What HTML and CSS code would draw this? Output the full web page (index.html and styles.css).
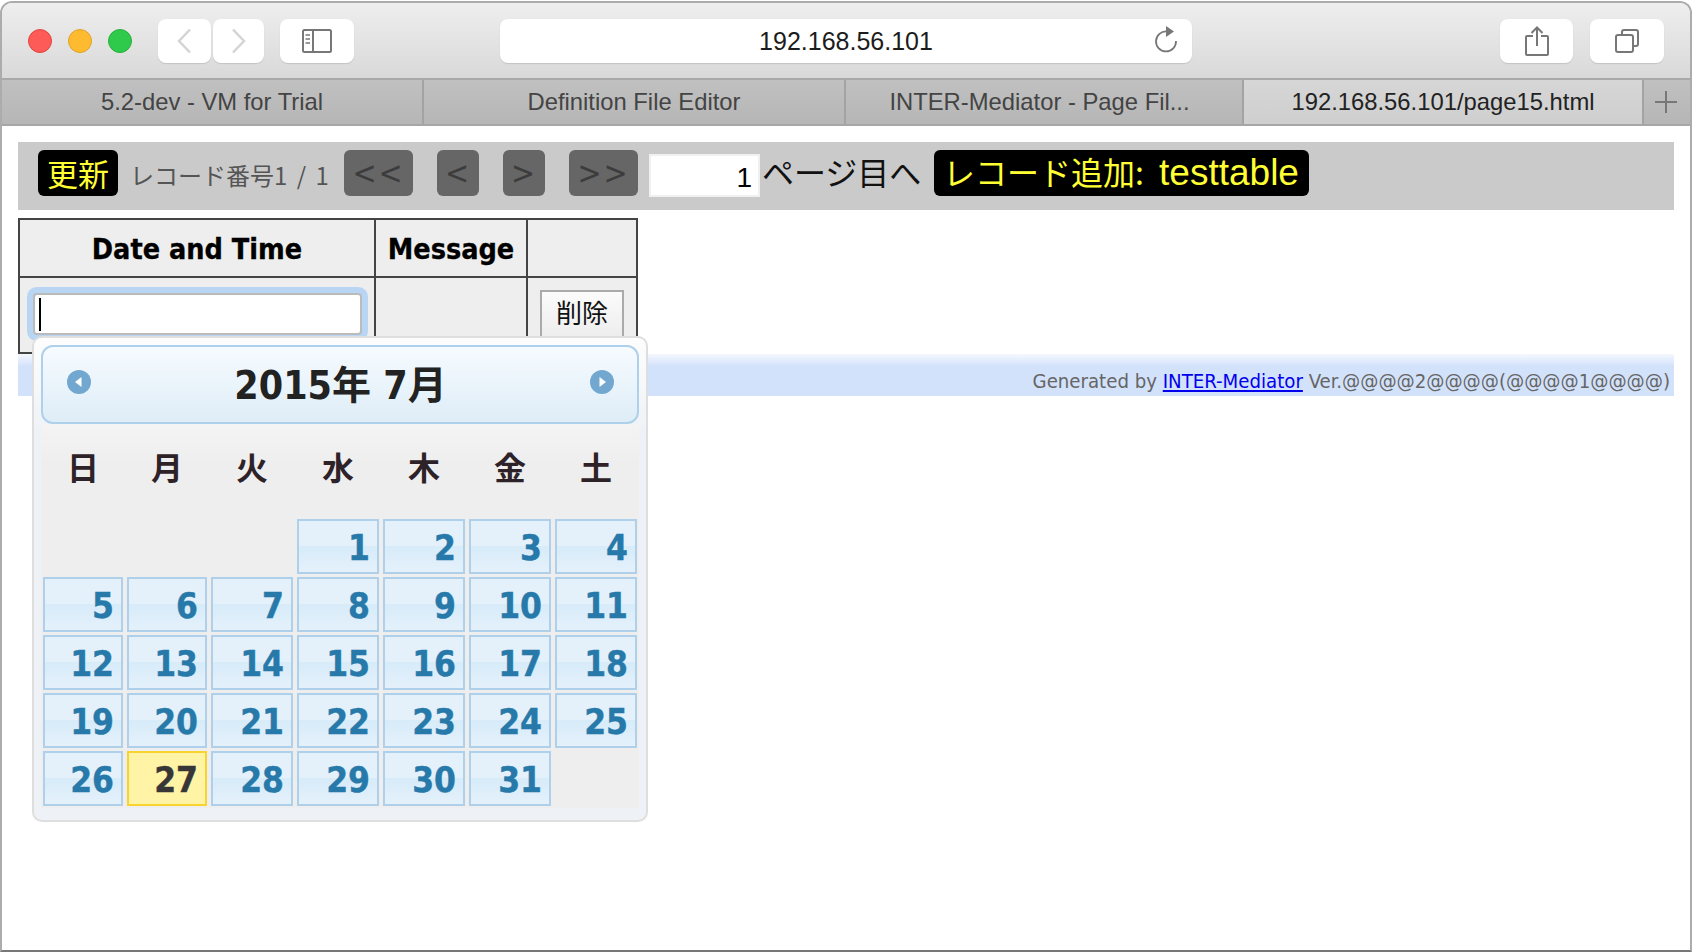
FILE: index.html
```html
<!DOCTYPE html>
<html lang="ja">
<head>
    <meta charset="UTF-8">
    <title>192.168.56.101/page15.html</title>
    <link rel="stylesheet" href="styles.css">
</head>
<body>
<div class="window">
    <div class="toolbar">
        <span class="light red"></span>
        <span class="light yellow"></span>
        <span class="light green"></span>
        <div class="tool back">
            <svg width="15" height="26" viewBox="0 0 15 26"><path d="M13 1.5 2 13l11 11.5" fill="none" stroke="#d4d4d4" stroke-width="2.5"/></svg>
        </div>
        <div class="tool forward">
            <svg width="15" height="26" viewBox="0 0 15 26"><path d="M2 1.500 13 13 2 24.500" fill="none" stroke="#d4d4d4" stroke-width="2.5"/></svg>
        </div>
        <div class="tool sidebar">
            <svg width="30" height="24" viewBox="0 0 30 24"><rect x="1" y="1" width="28" height="22" rx="1.500" fill="none" stroke="#777" stroke-width="2"/><path d="M11 1v22" stroke="#777" stroke-width="2"/><path d="M3.500 6H8M3.500 10H8M3.500 14H8" stroke="#999" stroke-width="2"/></svg>
        </div>
        <div class="address">
            <span class="address-text">192.168.56.101</span>
            <svg class="reload" width="24" height="28" viewBox="0 0 24 28"><path d="M13 6.500A10 10 0 1 0 22 16" fill="none" stroke="#777" stroke-width="1.800"/><path d="M12 1l8 5.500-8 5.500z" fill="#777"/></svg>
        </div>
        <div class="tool share">
            <svg width="24" height="30" viewBox="0 0 24 30"><path d="M8 10H2a1 1 0 0 0-1 1v17a1 1 0 0 0 1 1h20a1 1 0 0 0 1-1V11a1 1 0 0 0-1-1h-6" fill="none" stroke="#777" stroke-width="2"/><path d="M12 20V2M6.500 7 12 1.500 17.500 7" fill="none" stroke="#777" stroke-width="2"/></svg>
        </div>
        <div class="tool copies">
            <svg width="24" height="24" viewBox="0 0 24 24"><rect x="1" y="6" width="17" height="17" rx="2" fill="none" stroke="#777" stroke-width="2"/><path d="M7 5V3a2 2 0 0 1 2-2h12a2 2 0 0 1 2 2v12a2 2 0 0 1-2 2h-2" fill="none" stroke="#777" stroke-width="2"/></svg>
        </div>
    </div>

    <div class="tabs">
        <div class="tab tab-1">5.2-dev - VM for Trial</div>
        <div class="tab tab-2">Definition File Editor</div>
        <div class="tab tab-3">INTER-Mediator - Page Fil...</div>
        <div class="tab tab-4 active">192.168.56.101/page15.html</div>
        <div class="tab-add">
            <svg width="24" height="24" viewBox="0 0 24 24"><path d="M12 1v22M1 12h22" stroke="#777" stroke-width="2"/></svg>
        </div>
    </div>

    <div class="page">
        <div class="nav">
            <span class="nav-action">更新</span>
            <span class="nav-count">レコード番号1 / 1</span>
            <span class="nav-move wide">&lt;&lt;</span>
            <span class="nav-move">&lt;</span>
            <span class="nav-move">&gt;</span>
            <span class="nav-move wide last">&gt;&gt;</span>
            <input class="nav-page" type="text" value="1">
            <span class="nav-label">ページ目へ</span>
            <span class="nav-action add">レコード追加: <span class="add-name">testtable</span></span>
        </div>

        <table class="records">
            <tr>
                <th class="col-date">Date and Time</th>
                <th class="col-message">Message</th>
                <th class="col-delete"></th>
            </tr>
            <tr>
                <td class="date-cell">
                    <input class="date-input" type="text">
                    <span class="caret"></span>
                </td>
                <td></td>
                <td class="delete-cell"><button class="delete">削除</button></td>
            </tr>
        </table>

        <div class="footer">
            Generated by&nbsp;<a href="#">INTER-Mediator</a>&nbsp;Ver.@@@@2@@@@(@@@@1@@@@)
        </div>

        <!-- date picker popup, sits over the table and footer -->
        <div class="picker">
            <div class="picker-head">
                <svg width="24" height="24" viewBox="0 0 24 24"><circle cx="12" cy="12" r="12" fill="#72a7cf"/><path d="M14.500 7v10L8 12z" fill="#fff"/></svg>
                <span class="picker-title">2015年 7月</span>
                <svg width="24" height="24" viewBox="0 0 24 24"><circle cx="12" cy="12" r="12" fill="#72a7cf"/><path d="M9.500 7v10l6.500-5z" fill="#fff"/></svg>
            </div>
            <div class="picker-body">
                <div class="weekdays">
                    <span>日</span><span>月</span><span>火</span><span>水</span><span>木</span><span>金</span><span>土</span>
                </div>
                <div class="days">
                    <span></span><span></span><span></span>
                    <a class="day">1</a><a class="day">2</a><a class="day">3</a><a class="day">4</a>
                    <a class="day">5</a><a class="day">6</a><a class="day">7</a><a class="day">8</a><a class="day">9</a><a class="day">10</a><a class="day">11</a>
                    <a class="day">12</a><a class="day">13</a><a class="day">14</a><a class="day">15</a><a class="day">16</a><a class="day">17</a><a class="day">18</a>
                    <a class="day">19</a><a class="day">20</a><a class="day">21</a><a class="day">22</a><a class="day">23</a><a class="day">24</a><a class="day">25</a>
                    <a class="day">26</a><a class="day today">27</a><a class="day">28</a><a class="day">29</a><a class="day">30</a><a class="day">31</a>
                </div>
            </div>
        </div>
    </div>
</div>
</body>
</html>
```
FILE: styles.css
```css
* {
    box-sizing: border-box;
}
html, body {
    margin: 0;
    height: 100%;
    background: #fff;
    overflow: hidden;
}
.window {
    display: flex;
    flex-direction: column;
    height: 951px;
    margin-top: 1px;
    border: 2px solid #acacac;
    border-bottom-color: #777;
    border-radius: 12px 12px 0 0;
    overflow: hidden;
    font-family: "Liberation Sans", "Noto Sans CJK JP", sans-serif;
}

/* safari toolbar */
.toolbar {
    display: flex;
    align-items: center;
    flex: 0 0 77px;
    background: linear-gradient(#eeeeee, #d9d9d9);
    border-bottom: 2px solid #a9a9a9;
}
.light {
    width: 24px;
    height: 24px;
    border-radius: 50%;
    margin-right: 16px;
}
.light.red {
    margin-left: 26px;
    background: #fc5b57;
    border: 1px solid #e2463f;
}
.light.yellow {
    background: #febb2f;
    border: 1px solid #e1a12b;
}
.light.green {
    background: #2fc94b;
    border: 1px solid #29ae3d;
}
.tool, .address {
    display: flex;
    align-items: center;
    justify-content: center;
    height: 44px;
    background: #fff;
    border-radius: 8px;
    box-shadow: 0 1px 1px #c4c4c4;
}
.back {
    width: 53px;
    margin-left: 10px;
}
.forward {
    width: 51px;
    margin-left: 2px;
}
.sidebar {
    width: 74px;
    margin-left: 16px;
}
.address {
    position: relative;
    width: 692px;
    margin-left: 146px;
}
.address-text {
    font-size: 25px;
    color: #1c1c1c;
    padding-top: 1px;
}
.reload {
    position: absolute;
    right: 14px;
    top: 6px;
}
.share {
    width: 73px;
    margin-left: 308px;
}
.copies {
    width: 74px;
    margin-left: 17px;
}

/* tab strip */
.tabs {
    display: flex;
    flex: 0 0 46px;
    background: linear-gradient(#c0c0c0, #b6b6b6);
    border-bottom: 2px solid #a6a6a6;
}
.tab {
    display: flex;
    align-items: center;
    justify-content: center;
    border-right: 2px solid #a3a3a3;
    font-size: 23.800px;
    color: #444;
}
.tab-1 {
    width: 422px;
}
.tab-2 {
    width: 422px;
}
.tab-3 {
    width: 398px;
    padding-right: 9px;
}
.tab-4 {
    width: 400px;
}
.tab.active {
    background: linear-gradient(#d6d6d6, #cfcfcf);
    color: #222;
}
.tab-add {
    flex: 1;
    display: flex;
    align-items: center;
    justify-content: center;
    padding-right: 3px;
}

/* page */
.page {
    position: relative;
    flex: 1;
    padding: 16px 16px 0 16px;
    background: #fff;
    font-family: "DejaVu Sans", "Noto Sans CJK JP", sans-serif;
    font-stretch: condensed;
}
.nav {
    display: flex;
    align-items: center;
    height: 68px;
    padding: 0 0 0 20px;
    background: #cacaca;
    font-family: "Noto Sans CJK JP", sans-serif;
}
.nav-action {
    display: flex;
    align-items: center;
    height: 46px;
    padding: 0 9px 2px;
    margin-bottom: 6px;
    background: #000;
    border-radius: 6px;
    color: #ff3;
    font-size: 31px;
    white-space: nowrap;
}
.nav-count {
    width: 226px;
    padding-left: 12px;
    margin-bottom: 3px;
    color: #555;
    font-size: 24px;
    word-spacing: 4px;
    white-space: nowrap;
}
.nav-move {
    display: flex;
    align-items: center;
    justify-content: center;
    width: 42px;
    height: 46px;
    margin-right: 24px;
    margin-bottom: 6px;
    background: #666;
    border-radius: 6px;
    color: #3c3c3c;
    font-family: "DejaVu Sans", sans-serif;
    font-size: 32px;
    letter-spacing: 2px;
}
.nav-move.wide {
    width: 69px;
}
.nav-move.last {
    margin-right: 11px;
}
.nav-page {
    width: 111px;
    height: 43px;
    padding: 5px 6px 0 0;
    margin-bottom: 2px;
    border: 2px solid #f0f0f0;
    background: #fff;
    font-family: "Liberation Sans", sans-serif;
    font-size: 28px;
    color: #000;
    text-align: right;
}
.nav-label {
    width: 174px;
    padding-left: 2px;
    margin-bottom: 10px;
    font-size: 32px;
    color: #111;
    white-space: nowrap;
}
.nav-action.add {
    width: 375px;
    padding: 0 0 5px 9px;
    font-size: 32px;
    white-space: pre;
}
.add-name {
    font-family: "Liberation Sans", sans-serif;
    font-size: 37px;
    margin: 5px 0 0 8px;
}

.records {
    width: 620px;
    margin-top: 8px;
    border-collapse: collapse;
    table-layout: fixed;
    background: #eee;
    color: #000;
}
.records th, .records td {
    border: 2px solid #444;
    padding: 0;
}
.records th {
    height: 58px;
    padding-top: 2px;
    font-size: 28.500px;
    font-weight: 700;
    -webkit-text-stroke: 0.3px #000;
}
.col-date {
    width: 356px;
}
.col-message {
    width: 152px;
}
.records td {
    height: 76px;
}
.date-cell {
    position: relative;
}
.date-input {
    display: block;
    width: 329px;
    height: 42px;
    margin: -2px 0 0 13px;
    border: 2px solid #bbb;
    background: #fff;
    border-radius: 4px;
    box-shadow: 0 0 0 6px #b8d6f4;
    outline: none;
}
.caret {
    position: absolute;
    left: 19px;
    top: 20px;
    width: 2px;
    height: 33px;
    background: #000;
}
.records td.delete-cell {
    padding: 12px 0 0 12px;
    vertical-align: top;
}
.delete {
    display: block;
    width: 84px;
    height: 60px;
    margin: 0;
    border: 2px solid #aaa;
    background: linear-gradient(#fbfbfb, #ececec 48px, #f6f6f6 48px);
    font-family: "Noto Sans CJK JP", sans-serif;
    font-size: 26px;
    padding: 0 0 18px;
    color: #111;
}
.footer {
    display: flex;
    justify-content: flex-end;
    align-items: center;
    height: 42px;
    padding: 12px 4px 0 0;
    background: linear-gradient(#f5f8fe, #d3e2fb 12px);
    font-size: 20.200px;
    color: #666;
    white-space: nowrap;
}
.footer a {
    color: #00e;
}

/* date picker */
.picker {
    position: absolute;
    left: 30px;
    top: 210px;
    width: 616px;
    height: 486px;
    padding: 7px 7px 0;
    background: linear-gradient(#fdfdfd, #eef2f6 20%);
    border: 2px solid #dedede;
    border-radius: 10px;
}
.picker-head {
    display: flex;
    align-items: center;
    justify-content: space-between;
    height: 79px;
    padding: 0 23px 5px 24px;
    background: linear-gradient(#f6fbff, #deedf7);
    border: 2px solid #aed0ea;
    border-radius: 12px;
}
.picker-title {
    font-size: 39px;
    font-weight: 700;
    color: #222;
    font-family: "DejaVu Sans", "Noto Sans CJK JP", sans-serif;
}
.picker-body {
    height: 384px;
    padding: 0 2px;
    background: linear-gradient(#f4f4f4, #eeeeee 40px);
}
.weekdays, .days {
    display: grid;
    grid-template-columns: 80px 80px 82px 82px 82px 82px 82px;
    column-gap: 4px;
}
.weekdays {
    align-items: center;
    height: 95px;
    padding-bottom: 11px;
    font-family: "Noto Sans CJK JP", sans-serif;
    font-size: 32px;
    font-weight: 700;
    color: #2e2229;
    text-align: center;
}
.days {
    grid-auto-rows: 55px;
    row-gap: 3px;
}
.day {
    padding-right: 7px;
    background: linear-gradient(#e4f1fb, #e4f1fb 48%, #d7ebf9 50%, #e4f1fb);
    border: 2px solid #aed0ea;
    color: #2779aa;
    font-size: 35px;
    font-weight: 700;
    line-height: 54px;
    text-align: right;
    -webkit-text-stroke: 0.4px;
}
.day.today {
    background: #fff3a6;
    border-color: #fad42e;
    color: #363636;
}
```
